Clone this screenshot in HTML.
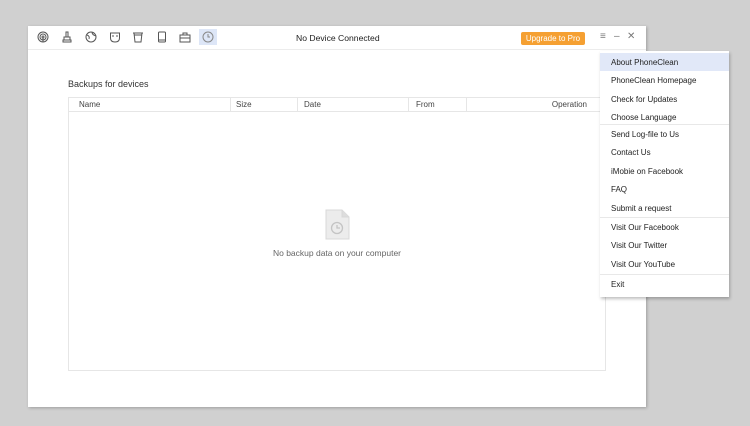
<!DOCTYPE html>
<html><head><style>
body{margin:0;width:750px;height:426px;background:#d0d0d0;position:relative;overflow:hidden;font-family:"Liberation Sans",sans-serif;}
.win{position:absolute;left:28px;top:26px;width:618px;height:381px;background:#fff;box-shadow:1px 1px 3px rgba(0,0,0,.25);}
.bar{position:absolute;left:0;top:0;width:618px;height:23px;border-bottom:1px solid #ececec;}
.ic{position:absolute;top:5px;}
.title{position:absolute;left:268px;top:7px;font-size:8.6px;color:#222;}
.up{position:absolute;left:493px;top:6px;width:64px;height:13px;background:#f5a032;border-radius:2px;color:#fff;font-size:8px;line-height:13px;text-align:center;}
.ctl{position:absolute;top:5px;font-size:10px;color:#777;}
.lab{position:absolute;left:40px;top:53px;font-size:9px;color:#333;}
.tbl{position:absolute;left:40px;top:71px;width:536px;height:272px;border:1px solid #e6e6e6;}
.hd{position:absolute;left:0;top:0;width:536px;height:13px;border-bottom:1px solid #e6e6e6;font-size:8px;color:#444;}
.hd span{position:absolute;top:2px;}
.hd i{position:absolute;top:0;width:1px;height:13px;background:#e6e6e6;}
.empty{position:absolute;left:0;top:150px;width:536px;text-align:center;font-size:8.5px;color:#666;}
.menu{position:absolute;left:600px;top:51px;width:129px;height:246px;background:#fff;box-shadow:1px 2px 3px rgba(0,0,0,.25);font-size:8px;color:#222;}
.menu div{position:absolute;left:11px;}
.sep{position:absolute;left:0;width:129px;height:1px;background:#e8e8e8;}
</style></head><body>
<div class="win">
 <div class="bar">
  <svg class="ic" style="left:9px" width="12" height="12" viewBox="0 0 12 12" fill="none" stroke="#555" stroke-width="1"><circle cx="6" cy="6" r="5"/><circle cx="6" cy="6" r="3"/><circle cx="6" cy="6" r="1"/><path d="M6 7v4"/></svg>
  <svg class="ic" style="left:33px" width="12" height="12" viewBox="0 0 12 12" fill="none" stroke="#555"><path d="M5 1h2v5H5zM3 6h6v3H3zM2 9h8v2H2z"/></svg>
  <svg class="ic" style="left:57px" width="12" height="12" viewBox="0 0 12 12" fill="none" stroke="#555"><circle cx="6" cy="6" r="5"/><path d="M2 4q3 1 2 4M7 1q0 3 4 4"/></svg>
  <svg class="ic" style="left:81px" width="12" height="12" viewBox="0 0 12 12" fill="none" stroke="#555"><path d="M1.5 2h9v5q0 4-4.5 4T1.5 7z"/><path d="M3 5h2M7 5h2"/></svg>
  <svg class="ic" style="left:104px" width="12" height="12" viewBox="0 0 12 12" fill="none" stroke="#555"><path d="M1 2h10M2 2l1 9h6l1-9M2 4h8"/></svg>
  <svg class="ic" style="left:128px" width="12" height="12" viewBox="0 0 12 12" fill="none" stroke="#555"><rect x="2.5" y="1" width="7" height="10" rx="1"/><path d="M3 9h6"/></svg>
  <svg class="ic" style="left:151px" width="12" height="12" viewBox="0 0 12 12" fill="none" stroke="#555"><rect x="1" y="4" width="10" height="7"/><path d="M4 4V2h4v2M1 7h10"/></svg>
  <div style="position:absolute;left:171px;top:3px;width:18px;height:16px;background:#dde6f7"></div>
  <svg class="ic" style="left:174px" width="12" height="12" viewBox="0 0 12 12" fill="none" stroke="#888"><circle cx="6" cy="6" r="5"/><path d="M6 3v3h2"/></svg>
  <div class="title">No Device Connected</div>
  <div class="up">Upgrade to Pro</div>
  <div class="ctl" style="left:572px">≡</div>
  <div class="ctl" style="left:586px">–</div>
  <div class="ctl" style="left:599px">✕</div>
 </div>
 <div class="lab">Backups for devices</div>
 <div class="tbl">
  <div class="hd"><span style="left:10px">Name</span><i style="left:161px"></i><span style="left:167px">Size</span><i style="left:228px"></i><span style="left:235px">Date</span><i style="left:339px"></i><span style="left:347px">From</span><i style="left:397px"></i><span style="right:18px">Operation</span></div>
  <svg style="position:absolute;left:256px;top:111px" width="25" height="31" viewBox="0 0 25 31"><path d="M1 1h16l7 7v22H1z" fill="#ececec" stroke="#d8d8d8"/><path d="M17 1v7h7" fill="#ddd" stroke="#d8d8d8"/><circle cx="12" cy="19" r="5.5" fill="none" stroke="#c4c4c4" stroke-width="1.3"/><path d="M12 16v3h3" fill="none" stroke="#c4c4c4" stroke-width="1.3"/></svg>
  <div class="empty">No backup data on your computer</div>
 </div>
</div>
<div class="menu">
 <div style="left:0;top:2px;width:129px;height:18px;background:#e1e8f8"></div>
 <div style="top:7px">About PhoneClean</div>
 <div style="top:25px">PhoneClean Homepage</div>
 <div style="top:44px">Check for Updates</div>
 <div style="top:62px">Choose Language</div>
 <span class="sep" style="top:73px"></span>
 <div style="top:79px">Send Log-file to Us</div>
 <div style="top:97px">Contact Us</div>
 <div style="top:116px">iMobie on Facebook</div>
 <div style="top:134px">FAQ</div>
 <div style="top:153px">Submit a request</div>
 <span class="sep" style="top:166px"></span>
 <div style="top:172px">Visit Our Facebook</div>
 <div style="top:190px">Visit Our Twitter</div>
 <div style="top:209px">Visit Our YouTube</div>
 <span class="sep" style="top:223px"></span>
 <div style="top:229px">Exit</div>
</div>
</body></html>
